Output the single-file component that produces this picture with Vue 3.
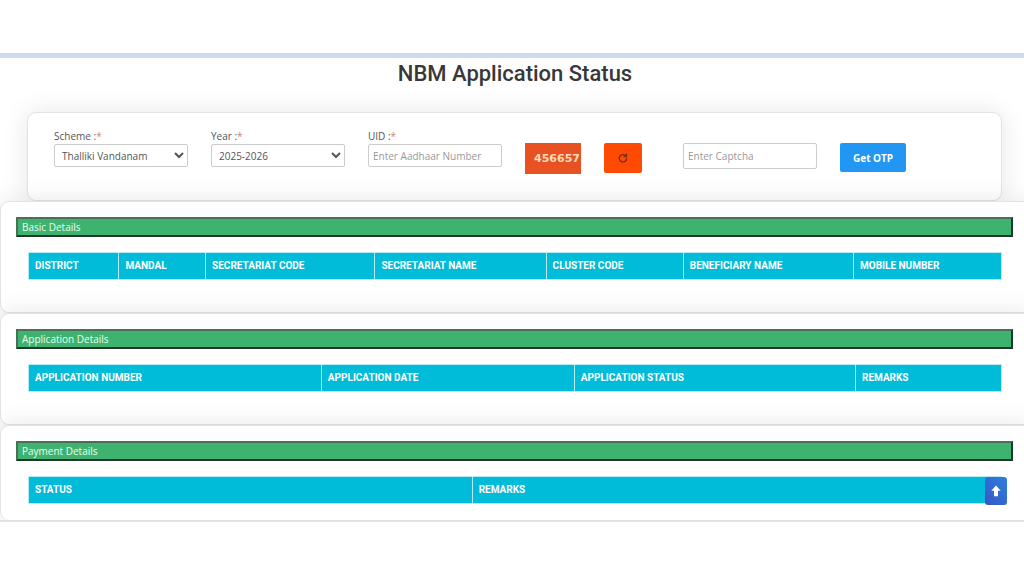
<script setup>
import { ref } from 'vue'

const scheme = ref('Thalliki Vandanam')
const year = ref('2025-2026')
const uid = ref('')
const captcha = ref('')

const sections = [
  {
    title: 'Basic Details',
    columns: [
      { label: 'District', width: 9.3 },
      { label: 'Mandal', width: 8.9 },
      { label: 'Secretariat Code', width: 17.4 },
      { label: 'Secretariat Name', width: 17.6 },
      { label: 'Cluster Code', width: 14.1 },
      { label: 'Beneficiary Name', width: 17.5 },
      { label: 'Mobile Number', width: 15.2 },
    ],
  },
  {
    title: 'Application Details',
    columns: [
      { label: 'Application Number', width: 30.1 },
      { label: 'Application Date', width: 26 },
      { label: 'Application Status', width: 28.9 },
      { label: 'Remarks', width: 15 },
    ],
  },
  {
    title: 'Payment Details',
    columns: [
      { label: 'Status', width: 45.6 },
      { label: 'Remarks', width: 54.4 },
    ],
  },
]
</script>

<template>
  <div class="page">
    <main class="content">
      <h1>NBM Application Status</h1>
      <form class="card search" @submit.prevent>
        <div class="field">
          <label for="scheme">Scheme :<span class="req">*</span></label>
          <select id="scheme" v-model="scheme">
            <option>Thalliki Vandanam</option>
          </select>
        </div>
        <div class="field">
          <label for="year">Year :<span class="req">*</span></label>
          <select id="year" v-model="year">
            <option>2025-2026</option>
          </select>
        </div>
        <div class="field">
          <label for="uid">UID :<span class="req">*</span></label>
          <input id="uid" v-model="uid" type="text" placeholder="Enter Aadhaar Number" />
        </div>
        <div class="captcha">456657</div>
        <button class="refresh" type="button" aria-label="Refresh captcha">
          <svg width="10" height="10" viewBox="0 0 10 10" fill="none" stroke="#7a2a08" stroke-width="1.3">
            <path d="M7.8 2.8A3.7 3.7 0 1 0 8.7 5.2" />
            <path d="M8.5 .6V3.6H5.6" />
          </svg>
        </button>
        <div class="field captcha-field">
          <input v-model="captcha" type="text" placeholder="Enter Captcha" aria-label="Captcha" />
        </div>
        <button class="otp" type="submit">Get OTP</button>
      </form>

      <section v-for="section in sections" :key="section.title" class="card panel">
        <h2>{{ section.title }}</h2>
        <table>
          <colgroup>
            <col v-for="column in section.columns" :key="column.label" :style="{ width: column.width + '%' }" />
          </colgroup>
          <thead>
            <tr>
              <th v-for="column in section.columns" :key="column.label" scope="col">{{ column.label }}</th>
            </tr>
          </thead>
        </table>
      </section>

      <button class="to-top" type="button" aria-label="Back to top">
        <svg width="10" height="12" viewBox="0 0 10 12" fill="#fff">
          <path d="M5 .5 9.7 5.8H7V11.3H3V5.8H.3Z" />
        </svg>
      </button>
    </main>
  </div>
</template>

<style>
body {
  background: #fff;
}
</style>

<style scoped>
.page {
  padding: 53px 0;
  font-family: "Open Sans", "Noto Sans", sans-serif;
  font-size: 10px;
  color: #555;
}

.content {
  position: relative;
  overflow: hidden;
  border-top: 5px solid #cfdaee;
  border-bottom: 2px solid #dde3e6;
}

h1 {
  margin: 0 0 22px;
  padding-left: 6px;
  font: 500 22px/32px Roboto, sans-serif;
  text-align: center;
  color: #383838;
}

.card {
  position: relative;
  border: 1px solid #e3e3e3;
  border-radius: 9px;
  background: #fff;
  box-shadow: 0 0 26px rgba(0, 0, 0, 0.1);
}

.search {
  display: flex;
  align-items: flex-start;
  gap: 23px;
  margin: 0 22px 0 27px;
  padding: 16px 26px 26px;
}

.field {
  flex: 0 1 134px;
  min-width: 0;
}

.field label {
  display: block;
  line-height: 15px;
}

.req {
  color: #d08080;
}

select,
input {
  display: block;
  box-sizing: border-box;
  width: 100%;
  height: 23px;
  margin: 0;
  border: 1px solid #ccc;
  border-radius: 2px;
  background: #fff;
  font: inherit;
  color: #555;
}

select {
  padding: 0 0 0 3px;
}

input {
  padding: 0 4px;
}

input::placeholder {
  color: #999;
}

.captcha {
  box-sizing: border-box;
  width: 56px;
  margin-top: 14px;
  padding-right: 1px;
  background: #e85222;
  font: bold 11px/31px "DejaVu Sans", sans-serif;
  text-align: right;
  color: #ffdcb8;
}

button {
  display: flex;
  align-items: center;
  justify-content: center;
  margin: 0;
  padding: 0;
  border: 0;
  border-radius: 2px;
}

.refresh {
  width: 38px;
  height: 30px;
  margin-top: 14px;
  background: #ff4a04;
}

.captcha-field {
  margin: 14px 0 0 18px;
}

.captcha-field input {
  height: 26px;
}

.otp {
  height: 29px;
  margin-top: 14px;
  padding: 0 13px;
  background: #2196f3;
  font: bold 10px "Open Sans", sans-serif;
  color: #fff;
}

.panel {
  margin-right: -10px;
  padding: 15px 20px 32px 15px;
}

.panel:last-of-type {
  padding-bottom: 16px;
  border-bottom: 0;
}

h2 {
  margin: 0 0 15px;
  padding: 0 4px;
  border: 2px solid;
  border-color: #4b6e5a #1d3828 #1d3828 #4b6e5a;
  background: #3eb370;
  font-size: 10px;
  font-weight: 400;
  line-height: 16px;
  color: #e8fff0;
}

table {
  width: calc(100% - 23px);
  margin-left: 12px;
  border-collapse: collapse;
  table-layout: fixed;
}

th {
  height: 26px;
  padding: 0 6px;
  border: 1px solid #b8eaf0;
  background: #00bcd9;
  font: bold 10px/16px Roboto, sans-serif;
  text-align: left;
  text-transform: uppercase;
  white-space: nowrap;
  color: #fff;
}

.to-top {
  position: absolute;
  right: 17px;
  bottom: 15px;
  width: 22px;
  height: 28px;
  border-radius: 3px;
  background: linear-gradient(45deg, #3a55c4, #2a80dd);
}
</style>
